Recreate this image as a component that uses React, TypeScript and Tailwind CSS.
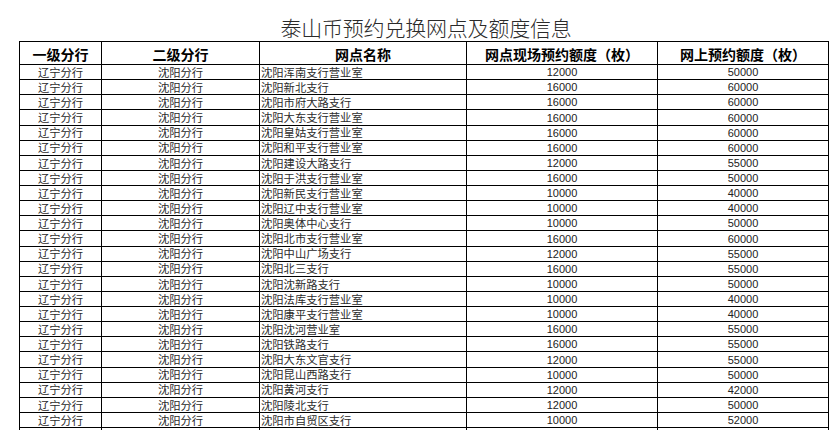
import React from "react";

interface Row {
  level1: string;
  level2: string;
  name: string;
  onsite: string;
  online: string;
}

const names: [string, string, string][] = [
  ["沈阳浑南支行营业室", "12000", "50000"],
  ["沈阳新北支行", "16000", "60000"],
  ["沈阳市府大路支行", "16000", "60000"],
  ["沈阳大东支行营业室", "16000", "60000"],
  ["沈阳皇姑支行营业室", "16000", "60000"],
  ["沈阳和平支行营业室", "16000", "60000"],
  ["沈阳建设大路支行", "12000", "55000"],
  ["沈阳于洪支行营业室", "16000", "50000"],
  ["沈阳新民支行营业室", "10000", "40000"],
  ["沈阳辽中支行营业室", "10000", "40000"],
  ["沈阳奥体中心支行", "10000", "50000"],
  ["沈阳北市支行营业室", "16000", "60000"],
  ["沈阳中山广场支行", "12000", "55000"],
  ["沈阳北三支行", "16000", "55000"],
  ["沈阳沈新路支行", "10000", "50000"],
  ["沈阳法库支行营业室", "10000", "40000"],
  ["沈阳康平支行营业室", "10000", "40000"],
  ["沈阳沈河营业室", "16000", "55000"],
  ["沈阳铁路支行", "16000", "55000"],
  ["沈阳大东文官支行", "12000", "55000"],
  ["沈阳昆山西路支行", "10000", "50000"],
  ["沈阳黄河支行", "12000", "42000"],
  ["沈阳陵北支行", "12000", "50000"],
  ["沈阳市自贸区支行", "10000", "52000"],
];

const rows: Row[] = names.map(([name, onsite, online]) => ({
  level1: "辽宁分行",
  level2: "沈阳分行",
  name,
  onsite,
  online,
}));

const cjk = "font-['Noto_Sans_CJK_SC',sans-serif]";
const num = "font-['Liberation_Sans',Arial,sans-serif]";
const cols = "grid grid-cols-[82px_158px_207px_191px_171px]";

const App = () => {
  return (
    <main className="w-[840px] h-[430px] bg-white overflow-hidden pl-[19px]">
      {/* title */}
      <div className="w-[810px] h-[41px] flex items-end justify-center pb-[3px]">
        <h1
          className={`${cjk} text-[21px] leading-none font-light text-[#2a2a2a] tracking-[-0.2px] ml-[4px]`}
        >
          泰山币预约兑换网点及额度信息
        </h1>
      </div>

      <div className="w-[810px] border-l border-t border-black">
        {/* header */}
        <div className={`${cols} h-[23px]`}>
          {[
            "一级分行",
            "二级分行",
            "网点名称",
            "网点现场预约额度（枚）",
            "网上预约额度（枚）",
          ].map((h) => (
            <div
              key={h}
              className={`${cjk} border-r border-b border-black flex items-center justify-center pt-[2px] text-[14px] leading-none font-bold text-black`}
            >
              {h}
            </div>
          ))}
        </div>

        {rows.map((r) => (
          <div key={r.name} className={`${cols} h-[15.125px]`}>
            <div
              className={`${cjk} border-r border-b border-black flex items-end justify-center pb-[1px] text-[11.3px] leading-none text-[#2b2b2b]`}
            >
              {r.level1}
            </div>
            <div
              className={`${cjk} border-r border-b border-black flex items-end justify-center pb-[1px] text-[11.3px] leading-none text-[#2b2b2b]`}
            >
              {r.level2}
            </div>
            <div
              className={`${cjk} border-r border-b border-black flex items-end pl-[1px] pb-[1px] text-[11.3px] leading-none text-[#2b2b2b] whitespace-nowrap`}
            >
              {r.name}
            </div>
            <div
              className={`${num} border-r border-b border-black flex items-end justify-center pb-[1px] text-[11px] leading-none text-[#222]`}
            >
              {r.onsite}
            </div>
            <div
              className={`${num} border-r border-b border-black flex items-end justify-center pb-[1px] text-[11px] leading-none text-[#222]`}
            >
              {r.online}
            </div>
          </div>
        ))}

        {/* partially visible next row */}
        <div className={`${cols} h-[15.125px]`}>
          <div className="border-r border-black" />
          <div className="border-r border-black" />
          <div className="border-r border-black" />
          <div className="border-r border-black" />
          <div className="border-r border-black" />
        </div>
      </div>
    </main>
  );
};

export default App;
